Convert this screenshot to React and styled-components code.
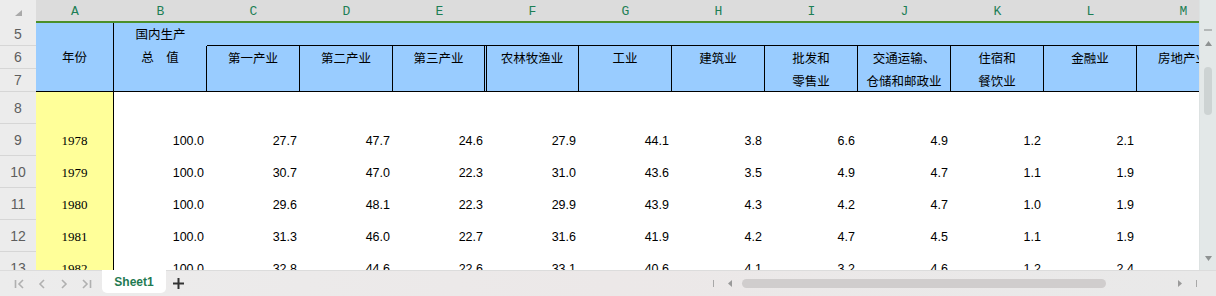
import React from "react";
import styled, { createGlobalStyle, css } from "styled-components";

const GlobalStyle = createGlobalStyle`
  html, body { margin: 0; padding: 0; background: #fff; }
  body {
    width: 1216px;
    height: 296px;
    overflow: hidden;
    font-family: "Liberation Sans", Arial, sans-serif;
  }
`;

const COLS = ["A", "B", "C", "D", "E", "F", "G", "H", "I", "J", "K", "L", "M"];

const HEADS = [
  ["第一产业"],
  ["第二产业"],
  ["第三产业"],
  ["农林牧渔业"],
  ["工业"],
  ["建筑业"],
  ["批发和", "零售业"],
  ["交通运输、", "仓储和邮政业"],
  ["住宿和", "餐饮业"],
  ["金融业"],
  ["房地产业"],
];

const ROWS = [
  { n: 8, year: "", values: [] },
  { n: 9, year: "1978", values: ["100.0", "27.7", "47.7", "24.6", "27.9", "44.1", "3.8", "6.6", "4.9", "1.2", "2.1"] },
  { n: 10, year: "1979", values: ["100.0", "30.7", "47.0", "22.3", "31.0", "43.6", "3.5", "4.9", "4.7", "1.1", "1.9"] },
  { n: 11, year: "1980", values: ["100.0", "29.6", "48.1", "22.3", "29.9", "43.9", "4.3", "4.2", "4.7", "1.0", "1.9"] },
  { n: 12, year: "1981", values: ["100.0", "31.3", "46.0", "22.7", "31.6", "41.9", "4.2", "4.7", "4.5", "1.1", "1.9"] },
  { n: 13, year: "1982", values: ["100.0", "32.8", "44.6", "22.6", "33.1", "40.6", "4.1", "3.2", "4.6", "1.2", "2.4"] },
];

const CJK = `"Noto Sans CJK SC", "Noto Sans", sans-serif`;

const Frame = styled.div`
  width: 1216px;
  height: 296px;
  display: flex;
  flex-direction: column;
  overflow: hidden;
`;

const Main = styled.div`
  display: flex;
  height: 270px;
`;

const Sheet = styled.div`
  flex: 1;
  min-width: 0;
  height: 270px;
  overflow: hidden;
  display: grid;
  grid-template-columns: 36px 78px repeat(12, 93px);
  grid-template-rows: 23px 23px 23px 23px repeat(6, 32px);
  align-content: start;
`;

const Corner = styled.div`
  background: #ececec;
  display: flex;
  align-items: flex-start;
  justify-content: center;
  padding-top: 10px;
  box-sizing: border-box;
`;

const ColHead = styled.div`
  background: #dcdcdc;
  border-bottom: 2px solid #4b8f2a;
  box-sizing: border-box;
  color: #1d7f55;
  font-family: "Liberation Mono", monospace;
  font-size: 13px;
  text-align: center;
  line-height: 20px;
  padding-top: 2px;
`;

const RowHead = styled.div`
  background: #ececec;
  border-bottom: 1px solid #d6d6d6;
  box-sizing: border-box;
  color: #5e5e5e;
  font-family: "Liberation Sans", Arial, sans-serif;
  font-size: 14px;
  display: flex;
  align-items: center;
  justify-content: center;
`;

const blackLines = css`
  ${(p) => p.$right && "border-right: 1px solid #000;"}
  ${(p) => p.$bottom && "border-bottom: 1px solid #000;"}
`;

const HeadCell = styled.div`
  background: #99ccff;
  box-sizing: border-box;
  font-family: ${CJK};
  font-size: 12.5px;
  color: #000;
  text-align: center;
  line-height: 22px;
  white-space: nowrap;
  overflow: hidden;
  ${(p) => p.$rowSpan && `grid-row: span ${p.$rowSpan};`}
  ${(p) => p.$colSpan && `grid-column: span ${p.$colSpan};`}
  ${(p) =>
    p.$middle &&
    css`
      display: flex;
      align-items: center;
      justify-content: center;
    `}
  ${blackLines}
`;

const HeadBox = styled.div`
  grid-row: span 2;
  background: #99ccff;
  box-sizing: border-box;
  border-right: 1px solid #000;
  border-bottom: 1px solid #000;
  font-family: ${CJK};
  font-size: 12.5px;
  color: #000;
  text-align: center;
  line-height: 23px;
  white-space: nowrap;
  ${(p) =>
    p.$double &&
    css`
      border-right: 3px double #000;
      margin-right: -1px;
      position: relative;
      z-index: 1;
    `}
`;

const YearCell = styled.div`
  background: #ffff99;
  border-right: 1px solid #000;
  box-sizing: border-box;
  font-family: "Liberation Serif", "Times New Roman", serif;
  font-size: 13px;
  color: #000;
  display: flex;
  align-items: center;
  justify-content: center;
  padding-top: 2px;
`;

const NumCell = styled.div`
  background: #fff;
  box-sizing: border-box;
  font-family: "Liberation Sans", Arial, sans-serif;
  font-size: 12.5px;
  color: #000;
  display: flex;
  align-items: center;
  justify-content: flex-end;
  padding-right: 3px;
  padding-top: 1px;
  white-space: nowrap;
`;

const VScroll = styled.div`
  width: 17px;
  height: 270px;
  background: #e3e8e8;
  border-left: 1px solid #dde2e2;
  box-sizing: border-box;
  display: flex;
  flex-direction: column;
  align-items: center;
  padding: 29px 0 9px;
`;

const Dash = styled.div`
  width: 8px;
  height: 2px;
  background: #b4b8b8;
`;

const VThumb = styled.div`
  width: 8px;
  height: 48px;
  border-radius: 4px;
  background: #cdd3d3;
  margin-top: 21px;
`;

const Arrow = styled.svg`
  display: block;
  flex: none;
  ${(p) => p.$push && "margin-top: auto;"}
  ${(p) => p.$gap && `margin-top: ${p.$gap}px;`}
  ${(p) => p.$left && `margin-left: ${p.$left}px;`}
  ${(p) => p.$auto && "margin-left: auto;"}
`;

const Bar = styled.div`
  height: 26px;
  background: linear-gradient(90deg, #ececec 0%, #ece8e8 50%, #e9e9e9 100%);
  border-top: 1px solid #dcdcdc;
  box-sizing: border-box;
  display: flex;
  align-items: center;
  padding-left: 9px;
`;

const NavBtn = styled.div`
  width: 22px;
  height: 14px;
  display: flex;
  align-items: center;
  justify-content: center;
`;

const Tab = styled.div`
  align-self: flex-start;
  margin-left: 5px;
  width: 64px;
  height: 23px;
  margin-top: -1px;
  background: #fff;
  border-radius: 0 0 5px 5px;
  display: flex;
  align-items: center;
  justify-content: center;
  font-family: "Liberation Sans", Arial, sans-serif;
  font-weight: bold;
  font-size: 12px;
  color: #1f7a52;
`;

const AddBtn = styled.div`
  margin-left: 6px;
  width: 12px;
  height: 12px;
  display: flex;
  align-items: center;
  justify-content: center;
`;

const HScroll = styled.div`
  margin-left: auto;
  width: 510px;
  height: 100%;
  box-sizing: border-box;
  display: flex;
  align-items: center;
  padding: 0 19px 0 7px;
`;

const Tick = styled.div`
  width: 1px;
  height: 7px;
  background: #a8a8a8;
  flex: none;
  ${(p) => p.$left && `margin-left: ${p.$left}px;`}
`;

const HThumb = styled.div`
  margin-left: 10px;
  width: 364px;
  height: 9px;
  border-radius: 5px;
  background: #d0cdcd;
  flex: none;
`;

const NavIcon = ({ kind }) => {
  const c = "#b0b0b0";
  return (
    <svg width="12" height="10" viewBox="0 0 12 10">
      {kind === "first" && (
        <>
          <line x1="1.5" y1="1" x2="1.5" y2="9" stroke={c} strokeWidth="1.6" />
          <polyline points="9,1 5,5 9,9" fill="none" stroke={c} strokeWidth="1.6" />
        </>
      )}
      {kind === "prev" && <polyline points="8,1 4,5 8,9" fill="none" stroke={c} strokeWidth="1.6" />}
      {kind === "next" && <polyline points="4,1 8,5 4,9" fill="none" stroke={c} strokeWidth="1.6" />}
      {kind === "last" && (
        <>
          <polyline points="3,1 7,5 3,9" fill="none" stroke={c} strokeWidth="1.6" />
          <line x1="10.5" y1="1" x2="10.5" y2="9" stroke={c} strokeWidth="1.6" />
        </>
      )}
    </svg>
  );
};

export default function App() {
  return (
    <>
      <GlobalStyle />
      <Frame>
        <Main>
          <Sheet>
            <Corner>
              <svg width="7" height="6" viewBox="0 0 7 6">
                <polygon points="7,0 7,6 0,6" fill="#a9a9a9" />
              </svg>
            </Corner>
            {COLS.map((c) => (
              <ColHead key={c}>{c}</ColHead>
            ))}

            <RowHead>5</RowHead>
            <HeadCell $rowSpan={3} $middle $right $bottom>
              年份
            </HeadCell>
            <HeadCell>国内生产</HeadCell>
            <HeadCell $colSpan={11} $bottom />

            <RowHead>6</RowHead>
            <HeadCell $right>总　值</HeadCell>
            {HEADS.map((lines, i) => (
              <HeadBox key={i} $double={i === 2}>
                {lines.map((l) => (
                  <div key={l}>{l}</div>
                ))}
              </HeadBox>
            ))}

            <RowHead>7</RowHead>
            <HeadCell $right $bottom />

            {ROWS.map((r) => (
              <React.Fragment key={r.n}>
                <RowHead>{r.n}</RowHead>
                <YearCell>{r.year}</YearCell>
                {Array.from({ length: 12 }).map((_, i) => (
                  <NumCell key={i}>{r.values[i] || ""}</NumCell>
                ))}
              </React.Fragment>
            ))}
          </Sheet>
          <VScroll>
            <Dash />
            <Arrow width="7" height="5" viewBox="0 0 7 5" $gap={10}>
              <polygon points="3.5,0 7,5 0,5" fill="#8e9292" />
            </Arrow>
            <VThumb />
            <Arrow width="7" height="5" viewBox="0 0 7 5" $push>
              <polygon points="0,0 7,0 3.5,5" fill="#8e9292" />
            </Arrow>
          </VScroll>
        </Main>
        <Bar>
          <NavBtn>
            <NavIcon kind="first" />
          </NavBtn>
          <NavBtn>
            <NavIcon kind="prev" />
          </NavBtn>
          <NavBtn>
            <NavIcon kind="next" />
          </NavBtn>
          <NavBtn>
            <NavIcon kind="last" />
          </NavBtn>
          <Tab>Sheet1</Tab>
          <AddBtn>
            <svg width="11" height="11" viewBox="0 0 11 11">
              <line x1="5.5" y1="0" x2="5.5" y2="11" stroke="#333" strokeWidth="2" />
              <line x1="0" y1="5.5" x2="11" y2="5.5" stroke="#333" strokeWidth="2" />
            </svg>
          </AddBtn>
          <HScroll>
            <Tick />
            <Arrow width="4" height="7" viewBox="0 0 4 7" $left={14}>
              <polygon points="4,0 4,7 0,3.5" fill="#9a9a9a" />
            </Arrow>
            <HThumb />
            <Arrow width="4" height="7" viewBox="0 0 4 7" $auto>
              <polygon points="0,0 4,3.5 0,7" fill="#9a9a9a" />
            </Arrow>
            <Tick $left={14} />
          </HScroll>
        </Bar>
      </Frame>
    </>
  );
}
